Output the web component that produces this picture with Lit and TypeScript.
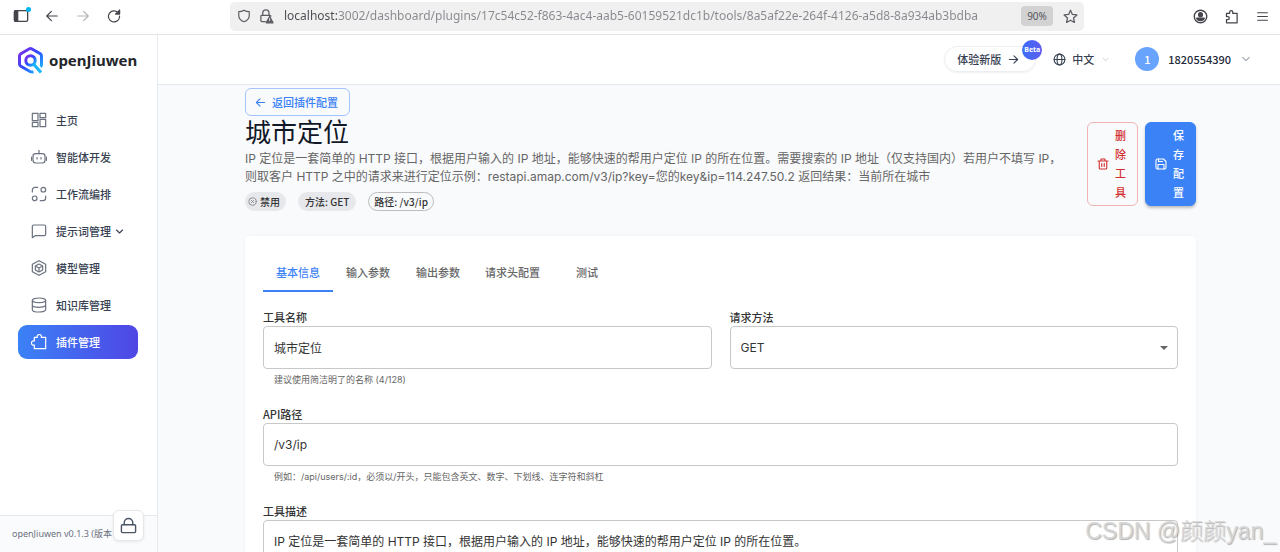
import { LitElement, html, css, svg } from "lit";
import { customElement, state } from "lit/decorators.js";
import { classMap } from "lit/directives/class-map.js";

const stroke = (size: number, body: unknown, width = 1.8) => html`<svg
  width=${size}
  height=${size}
  viewBox="0 0 24 24"
  fill="none"
  stroke="currentColor"
  stroke-width=${width}
  stroke-linecap="round"
  stroke-linejoin="round"
  aria-hidden="true"
>${body}</svg>`;

const icons = {
  panel: svg`<rect x="2" y="4" width="20" height="16" rx="2"/><path d="M3 4h4v16H3z" fill="currentColor"/>`,
  back: svg`<path d="M21 12H3M11 4l-8 8 8 8"/>`,
  forward: svg`<path d="M3 12h18M13 4l8 8-8 8"/>`,
  reload: svg`<path d="M20 7.5A9.5 9.5 0 1 0 21.5 12M21.500 2v6.500H15"/><path d="M21.500 2v6.500H15z" fill="currentColor"/>`,
  shield: svg`<path d="M12 2c3 2 6 2.500 9 2.500V11c0 5.500-4 9-9 11-5-2-9-5.500-9-11V4.500C6 4.500 9 4 12 2z"/>`,
  warnLock: svg`<path d="M10 20H4.500A1.500 1.500 0 0 1 3 18.500v-7A1.500 1.500 0 0 1 4.500 10h13a1.500 1.500 0 0 1 1.500 1.500M6 10V6.500a5 5 0 0 1 10 0V10"/><path d="M17 12l5.500 10h-11z" fill="currentColor"/><path d="M17 15.500v3" stroke="#f0f0f2" stroke-width="1.500"/>`,
  star: svg`<path d="M12 2l3 6.700 7.200.8-5.400 4.900 1.500 7.100L12 17.900l-6.300 3.600 1.500-7.100L1.800 9.500 9 8.700z"/>`,
  account: svg`<circle cx="12" cy="12" r="10"/><circle cx="12" cy="9" r="3" fill="currentColor"/><path d="M6 14.500h12c-.5 2.500-3 4-6 4s-5.500-1.500-6-4z" fill="currentColor"/>`,
  extension: svg`<path d="M4 7h5V5a2.500 2.500 0 0 1 5 0v2h7v15H4v-5h2a2.500 2.500 0 0 0 0-5H4z"/>`,
  menu: svg`<path d="M3 5h18M3 12h18M3 19h18"/>`,
  home: svg`<rect x="2" y="2" width="8.500" height="11"/><rect x="2" y="15.500" width="8.500" height="6.500"/><rect x="13.500" y="2" width="8.500" height="6.500"/><rect x="13.500" y="11" width="8.500" height="11"/>`,
  robot: svg`<rect x="3" y="7" width="18" height="14" rx="4"/><path d="M12 7V2M.800 12v5M23.200 12v5M9 13v2M15 13v2"/>`,
  flow: svg`<path d="M2 9V6a4 4 0 0 1 4-4h4M22 15v3a4 4 0 0 1-4 4h-4"/><circle cx="18.500" cy="5.500" r="3.500"/><circle cx="5.500" cy="18.500" r="3.500"/>`,
  chat: svg`<path d="M4 3h16a2 2 0 0 1 2 2v12a2 2 0 0 1-2 2H6l-4 3V5a2 2 0 0 1 2-2z"/>`,
  model: svg`<path d="M12 1l10 5.500v11L12 23 2 17.500v-11z"/><path d="M12 6l5.500 3v6L12 18l-5.500-3V9zM6.500 9l5.500 3 5.500-3M12 12v6"/>`,
  database: svg`<ellipse cx="12" cy="5" rx="10" ry="3.500"/><path d="M2 5v14c0 2 4.500 3.500 10 3.500S22 21 22 19V5M2 12c0 2 4.500 3.500 10 3.500S22 14 22 12"/>`,
  puzzle: svg`<path d="M5 5h4.500a3.200 3.200 0 1 1 6 0H22v17H5v-5.500a3.200 3.200 0 1 1 0-6z"/>`,
  lock: svg`<rect x="2" y="11" width="20" height="11" rx="1.500"/><path d="M6 11V8a6 6 0 0 1 12 0v3"/>`,
  chevron: svg`<path d="M4 8l8 8 8-8"/>`,
  globe: svg`<circle cx="12" cy="12" r="10"/><ellipse cx="12" cy="12" rx="4.500" ry="10"/><path d="M2 12h20"/>`,
  trash: svg`<path d="M2 6h20M8 6V2h8v4M4.500 6v14a2 2 0 0 0 2 2h11a2 2 0 0 0 2-2V6M9.500 11v6M14.500 11v6"/>`,
  save: svg`<path d="M5 2h12l5 5v12a3 3 0 0 1-3 3H5a3 3 0 0 1-3-3V5a3 3 0 0 1 3-3z"/><path d="M7 2v5h8M6 22v-9h12v9"/>`,
  disabled: svg`<circle cx="12" cy="12" r="10"/><path d="M9 9l6 6M15 9l-6 6"/>`,
};

const sheetFonts = css`"Noto Sans CJK SC", sans-serif`;
const chromeFonts = css`"Noto Sans", "Noto Sans CJK SC", sans-serif`;
const textFonts = css`Inter, "Noto Sans CJK SC", sans-serif`;

const base = css`
  * { box-sizing: border-box; }
  button, input, select, textarea { font: inherit; color: inherit; margin: 0; }
  button { border: 0; background: none; padding: 0; cursor: pointer; }
  svg { display: block; flex: none; }
`;

@customElement("browser-bar")
class BrowserBar extends LitElement {
  static styles = [base, css`
    :host {
      display: flex;
      align-items: center;
      height: 35px;
      padding: 0 9px 2px 12px;
      border-bottom: 1px solid #e4e4e7;
      background: #fff;
      color: #45454c;
      font-family: ${chromeFonts};
    }
    .group { display: flex; align-items: center; gap: 13px; }
    .nav { flex: 0 0 218px; }
    button { display: grid; place-items: center; width: 18px; height: 18px; position: relative; }
    .off { color: #b3b3b8; }
    .dot { position: absolute; top: 0; right: -1px; width: 5px; height: 5px; border-radius: 50%; background: #00b3f4; }
    .address {
      display: flex;
      align-items: center;
      flex: 0 1 854px;
      height: 29px;
      padding: 0 2px;
      border-radius: 5px;
      background: #f0f0f1;
    }
    .address button { width: 23px; color: #5b5b62; }
    .url {
      flex: 1;
      min-width: 0;
      padding: 0;
      margin-left: 6px;
      border: 0;
      outline: 0;
      font-size: 12px;
      line-height: 18px;
      background: linear-gradient(90deg, #4a4a50 53px, #87878d 53px);
      -webkit-background-clip: text;
      background-clip: text;
      color: transparent;
    }
    .address .zoom { width: 32px; height: 20px; border-radius: 4px; background: #d2d2d3; font-size: 10px; color: #55555b; margin-right: 6px; }
    .tools { margin-left: auto; }
  `];
  render() {
    return html`
      <div class="group nav">
        <button aria-label="侧栏">${stroke(16, icons.panel, 2)}<span class="dot"></span></button>
        <button aria-label="后退">${stroke(14, icons.back, 2)}</button>
        <button class="off" aria-label="前进" disabled>${stroke(14, icons.forward, 2)}</button>
        <button aria-label="刷新">${stroke(14, icons.reload, 2)}</button>
      </div>
      <div class="address">
        <button aria-label="跟踪保护">${stroke(14, icons.shield, 2)}</button>
        <button aria-label="连接信息">${stroke(15, icons.warnLock, 2)}</button>
        <input class="url" type="text" aria-label="地址"
          .value=${"localhost:3002/dashboard/plugins/17c54c52-f863-4ac4-aab5-60159521dc1b/tools/8a5af22e-264f-4126-a5d8-8a934ab3bdba"} />
        <button class="zoom">90%</button>
        <button aria-label="收藏">${stroke(15, icons.star, 2)}</button>
      </div>
      <div class="group tools">
        <button aria-label="账户">${stroke(15, icons.account, 2.2)}</button>
        <button aria-label="扩展">${stroke(15, icons.extension, 2)}</button>
        <button aria-label="菜单">${stroke(13, icons.menu, 2)}</button>
      </div>
    `;
  }
}

const navItems = [
  { label: "主页", icon: icons.home },
  { label: "智能体开发", icon: icons.robot },
  { label: "工作流编排", icon: icons.flow },
  { label: "提示词管理", icon: icons.chat, expandable: true },
  { label: "模型管理", icon: icons.model },
  { label: "知识库管理", icon: icons.database },
  { label: "插件管理", icon: icons.puzzle, active: true },
];

@customElement("side-nav")
class SideNav extends LitElement {
  static styles = [base, css`
    :host {
      display: flex;
      flex-direction: column;
      width: 158px;
      border-right: 1px solid #e5e9f0;
      background: #fff;
      font-family: ${sheetFonts};
    }
    .brand { display: flex; align-items: center; gap: 5px; height: 50px; padding: 0 0 1px 17px; font: 700 15px/20px "Noto Sans", sans-serif; color: #24262c; }
    .list { display: flex; flex-direction: column; gap: 3px; padding: 18px 19px 0 18px; }
    .item {
      display: flex;
      align-items: center;
      gap: 9px;
      height: 34px;
      padding-left: 13px;
      border-radius: 9px;
      font-size: 11px;
      font-weight: 500;
      color: #374151;
      text-decoration: none;
    }
    .item > svg:first-child { color: #6b7280; }
    .item span { line-height: 16px; }
    .item .chev { margin-left: -5px; display: flex; }
    .item.active, .item.active > svg:first-child { color: #fff; }
    .active { background: linear-gradient(90deg, #3b82f6, #4f46e5); }
    .foot {
      position: relative;
      margin-top: auto;
      height: 37px;
      padding: 0 12px;
      border-top: 1px solid #e5e9f0;
      background: #fafbfd;
      font: 9px/36px ${chromeFonts};
      color: #6b7280;
      white-space: nowrap;
    }
    .lock {
      position: absolute;
      right: 13px;
      top: -6px;
      width: 31px;
      height: 31px;
      display: grid;
      place-items: center;
      border: 1px solid #e5e7eb;
      border-radius: 6px;
      background: #fff;
      color: #4b5563;
      box-shadow: 0 1px 3px rgb(0 0 0 / 8%);
    }
  `];
  render() {
    return html`
      <div class="brand">
        <svg width="27" height="28" viewBox="0 0 27 28" fill="none" aria-hidden="true">
          <defs><linearGradient id="g" x1="0" y1="0" x2="1" y2="1">
            <stop offset="0" stop-color="#8a2be8"/><stop offset=".5" stop-color="#2f4bff"/><stop offset="1" stop-color="#17c8ff"/>
          </linearGradient></defs>
          <path d="M16.500 26q-2 .3-3.500-.5L3.800 20.200Q2.500 19.500 2.500 18V10Q2.500 8.600 3.800 7.800L12 3Q13.500 2.200 15 3l8.300 4.800Q24.500 8.600 24.500 10v8.500q0 1.500-1 2.200" stroke="url(#g)" stroke-width="3"/>
          <circle cx="13.500" cy="14.500" r="4.700" stroke="url(#g)" stroke-width="3"/>
          <path d="M16.500 18l7.500 8.500" stroke="#17b5ff" stroke-width="3"/>
        </svg>
        <span>openJiuwen</span>
      </div>
      <nav class="list">
        ${navItems.map((item) => html`
          <a href="#" class=${classMap({ item: true, active: !!item.active })}>
            ${stroke(16, item.icon)}
            <span>${item.label}</span>
            ${item.expandable ? html`<span class="chev">${stroke(9, icons.chevron, 3)}</span>` : ""}
          </a>`)}
      </nav>
      <div class="foot">
        <span>openJiuwen v0.1.3 (版本</span>
        <button class="lock" aria-label="锁定侧栏">${stroke(17, icons.lock, 2)}</button>
      </div>
    `;
  }
}

@customElement("top-bar")
class TopBar extends LitElement {
  static styles = [base, css`
    :host {
      display: flex;
      align-items: center;
      justify-content: flex-end;
      flex: none;
      height: 50px;
      padding: 0 29px 1px 0;
      border-bottom: 1px solid #e5e7ef;
      background: #fff;
      color: #374151;
      font: 500 11px/16px ${sheetFonts};
    }
    button { display: flex; align-items: center; }
    .try { position: relative; gap: 7px; height: 26px; padding: 0 16px 0 12px; border: 1px solid #eceef1; border-radius: 13px; box-shadow: 0 1px 2px rgb(0 0 0 / 6%); }
    .beta {
      position: absolute;
      top: -7px;
      right: -7px;
      width: 20px;
      height: 20px;
      border-radius: 50%;
      background: linear-gradient(90deg, #3b6ef6, #5f5cf1);
      color: #fff;
      font: 700 7px/19px "Noto Sans", sans-serif;
      text-align: center;
    }
    .lang { gap: 6px; margin-left: 17px; }
    .lang .faint { margin-left: 2px; color: #b6bac2; }
    .user { gap: 9px; margin-left: 26px; color: #1f2937; }
    .user .faint { margin-left: 1px; }
    .avatar { width: 24px; height: 24px; border-radius: 50%; background: #68a4fd; color: #fff; line-height: 24px; text-align: center; }
    .faint { color: #9ca3af; }
  `];
  render() {
    return html`
      <button class="try"><span>体验新版</span>${stroke(11, icons.forward, 2.4)}<span class="beta">Beta</span></button>
      <button class="lang">${stroke(13, icons.globe, 2)}<span>中文</span><span class="faint">${stroke(7, icons.chevron, 2.5)}</span></button>
      <button class="user"><span class="avatar">1</span><span>1820554390</span><span class="faint">${stroke(10, icons.chevron, 2.5)}</span></button>
    `;
  }
}

const tabs = ["基本信息", "输入参数", "输出参数", "请求头配置", "测试"];

@customElement("tool-editor")
class ToolEditor extends LitElement {
  @state() private tab = 0;

  static styles = [base, css`
    :host {
      display: block;
      padding: 3px 84px 24px 87px;
      background: #f9fafc;
      color: #333;
      font: 12px/18px ${sheetFonts};
    }
    .back {
      display: flex;
      align-items: center;
      gap: 6px;
      height: 28px;
      padding: 0 11px 0 9px;
      border: 1px solid #a3c5fb;
      border-radius: 6px;
      color: #3b82f6;
      font-size: 11px;
      font-weight: 500;
    }
    .head { display: flex; align-items: center; gap: 16px; }
    .intro { flex: 1; min-width: 0; }
    h1 { margin: 0 0 5px; font-size: 26px; line-height: 29px; font-weight: 400; color: #111827; }
    .intro p { margin: 0 0 6px; font-family: ${textFonts}; color: #666; }
    .chips { display: flex; gap: 12px; font-size: 10px; font-weight: 500; }
    .chip { display: flex; align-items: center; gap: 3px; height: 19px; padding: 0 6px; border: 1px solid transparent; border-radius: 10px; background: #e6e8eb; }
    .chip.state { padding: 0 5px 0 2px; }
    .chip.state svg { color: #777; }
    .chip.line { padding: 0 5px; border-color: #bdbdbd; background: none; }
    .actions { display: flex; gap: 7px; }
    .action {
      display: flex;
      align-items: center;
      gap: 6px;
      padding: 3px 11px 3px 9px;
      border: 1px solid #3b82f6;
      border-radius: 6px;
      background: #3b82f6;
      color: #fff;
      font-size: 11px;
      line-height: 19px;
      font-weight: 500;
      box-shadow: 0 2px 3px rgb(0 0 0 / 25%);
    }
    .action span { width: 1em; }
    .action.danger { border-color: #f0b4b4; background: none; color: #d32f2f; box-shadow: none; }
    .card { margin-top: 25px; padding: 18px; border-radius: 4px; background: #fff; box-shadow: 0 0 4px rgb(0 0 0 / 3%); }
    .tabs { display: flex; margin-bottom: 16px; }
    .tab { min-width: 70px; height: 38px; padding: 0 12px; border-bottom: 2px solid transparent; font-size: 11px; font-weight: 500; color: #666; }
    .tab.on { color: #3b82f6; border-color: #3b82f6; }
    .form { display: grid; grid-template-columns: 1fr 1fr; gap: 18px; }
    .field { display: flex; flex-direction: column; min-width: 0; }
    .wide { grid-column: 1 / -1; }
    label { font-size: 11px; font-weight: 500; }
    .box { width: 100%; height: 43px; padding: 0 10px; border: 1px solid #c8c8c8; border-radius: 4px; background: #fff; outline: 0; font-family: ${textFonts}; }
    textarea.box { height: 84px; padding: 12px 10px; resize: none; }
    .pick { display: grid; align-items: center; }
    .pick > * { grid-area: 1 / 1; }
    .pick select { appearance: none; }
    .pick svg { justify-self: end; margin-right: 10px; pointer-events: none; }
    small { margin: 4px 11px 0; font: 9px/14px ${textFonts}; color: #666; }
  `];

  render() {
    return html`
      <button class="back">${stroke(11, icons.back, 2.4)}<span>返回插件配置</span></button>
      <header class="head">
        <div class="intro">
          <h1>城市定位</h1>
          <p>IP 定位是一套简单的 HTTP 接口，根据用户输入的 IP 地址，能够快速的帮用户定位 IP 的所在位置。需要搜索的 IP 地址（仅支持国内）若用户不填写 IP，<wbr>则取客户 HTTP 之中的请求来进行定位示例：restapi.amap.com/v3/ip?key=您的key&amp;ip=114.247.50.2 返回结果：当前所在城市</p>
          <div class="chips">
            <span class="chip state">${stroke(9, icons.disabled, 2)}禁用</span>
            <span class="chip">方法: GET</span>
            <span class="chip line">路径: /v3/ip</span>
          </div>
        </div>
        <div class="actions">
          <button class="action danger">${stroke(12, icons.trash, 2.2)}<span>删除工具</span></button>
          <button class="action">${stroke(12, icons.save, 2.2)}<span>保存配置</span></button>
        </div>
      </header>
      <section class="card">
        <div class="tabs" role="tablist">
          ${tabs.map((t, i) => html`<button role="tab" aria-selected=${i === this.tab}
            class=${classMap({ tab: true, on: i === this.tab })} @click=${() => (this.tab = i)}>${t}</button>`)}
        </div>
        <form class="form">
          <div class="field">
            <label for="name">工具名称</label>
            <input id="name" class="box" type="text" value="城市定位" />
            <small>建议使用简洁明了的名称 (4/128)</small>
          </div>
          <div class="field">
            <label for="method">请求方法</label>
            <div class="pick">
              <select id="method" class="box"><option>GET</option></select>
              <svg width="8" height="4" viewBox="0 0 8 4" aria-hidden="true"><path d="M0 0h8L4 4z" fill="#666"/></svg>
            </div>
          </div>
          <div class="field wide">
            <label for="path">API路径</label>
            <input id="path" class="box" type="text" value="/v3/ip" />
            <small>例如：/api/users/:id，必须以/开头，只能包含英文、数字、下划线、连字符和斜杠</small>
          </div>
          <div class="field wide">
            <label for="desc">工具描述</label>
            <textarea id="desc" class="box" .value=${"IP 定位是一套简单的 HTTP 接口，根据用户输入的 IP 地址，能够快速的帮用户定位 IP 的所在位置。"}></textarea>
          </div>
        </form>
      </section>
    `;
  }
}

@customElement("app-root")
class AppRoot extends LitElement {
  static styles = [base, css`
    :host { position: relative; display: flex; flex-direction: column; height: 100vh; overflow: hidden; }
    .body { display: flex; flex: 1; min-height: 0; }
    .main { display: flex; flex-direction: column; flex: 1; min-width: 0; }
    .scroll { flex: 1; min-height: 0; overflow: hidden; }
    .mark {
      position: absolute;
      right: 4px;
      bottom: 5px;
      font: 23px/32px "Liberation Sans", "Noto Sans CJK SC", sans-serif;
      font-weight: 300;
      color: rgb(215 215 215 / 90%);
      text-shadow: 1px 1px 1px rgb(130 130 130 / 60%);
      pointer-events: none;
    }
  `];
  render() {
    return html`
      <browser-bar></browser-bar>
      <div class="body">
        <side-nav></side-nav>
        <main class="main">
          <top-bar></top-bar>
          <div class="scroll"><tool-editor></tool-editor></div>
        </main>
      </div>
      <div class="mark">CSDN @颜颜yan_</div>
    `;
  }
}
